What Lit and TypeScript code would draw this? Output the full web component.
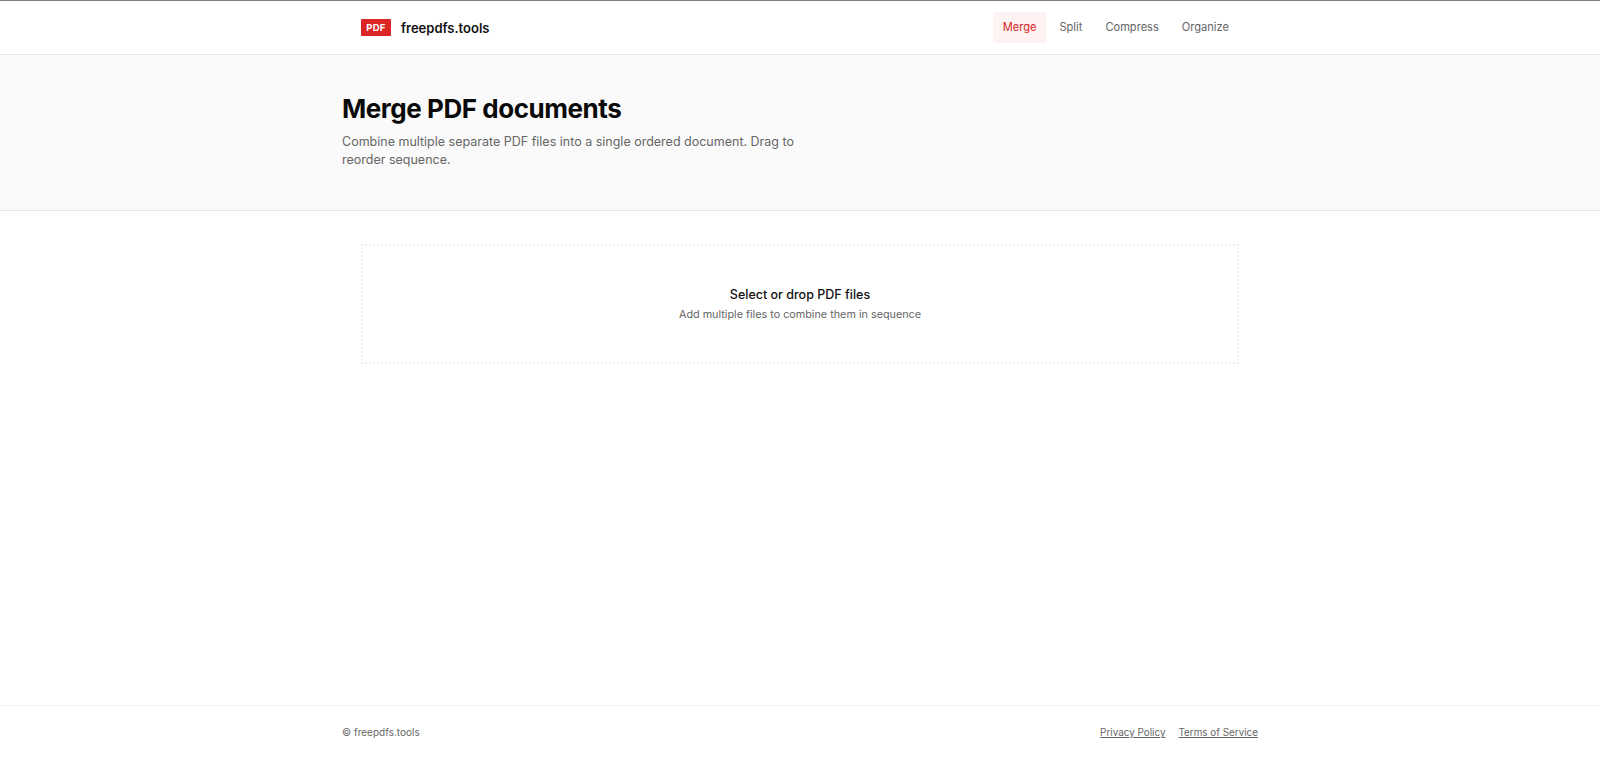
import { LitElement, css, html } from 'lit';
import { customElement } from 'lit/decorators.js';

@customElement('app-root')
export class AppRoot extends LitElement {
  static styles = css`
    :host {
      display: flex;
      flex-direction: column;
      min-height: 758px;
      background: #fff;
      color: #0a0a0a;
      font-family: 'Inter', 'Liberation Sans', sans-serif;
      box-sizing: border-box;
    }

    .topline {
      height: 1px;
      background: #7f7f7f;
    }

    header {
      height: 53px;
      border-bottom: 1px solid #e5e5e5;
      display: flex;
      justify-content: center;
    }

    .bar {
      width: 878px;
      display: flex;
      align-items: center;
      justify-content: space-between;
    }

    .brand {
      display: flex;
      align-items: center;
      gap: 10px;
      font-size: 13px;
      font-weight: 600;
      color: #111;
    }

    .badge {
      width: 30px;
      height: 17px;
      background: #dc2626;
      color: #fff;
      border-radius: 1px;
      font-size: 9.5px;
      font-weight: 700;
      letter-spacing: 0.3px;
      display: flex;
      align-items: center;
      justify-content: center;
    }

    nav {
      display: flex;
      gap: 3px;
      margin-bottom: 1px;
    }

    nav a {
      padding: 8px 10px;
      font-size: 11.1px;
      line-height: 15px;
      font-weight: 400;
      color: #666;
      border-radius: 3px;
    }

    nav a.active {
      background: #fef2f2;
      color: #dc2626;
    }

    .hero {
      height: 156px;
      box-sizing: border-box;
      background: #fafafa;
      border-bottom: 1px solid #e5e5e5;
      padding-top: 38px;
      display: flex;
      justify-content: center;
    }

    .hero-in {
      width: 916px;
    }

    h1 {
      margin: 0 0 9px;
      font-size: 26px;
      line-height: 31px;
      font-weight: 700;
      letter-spacing: -0.45px;
      color: #0a0a0a;
    }

    .hero p {
      margin: 0;
      max-width: 480px;
      font-size: 12.5px;
      line-height: 18.4px;
      color: #666;
    }

    main {
      flex: 1;
      display: flex;
      justify-content: center;
      padding-top: 33px;
    }

    .drop {
      width: 878px;
      height: 120px;
      box-sizing: border-box;
      border: 2px dotted #f0f0f0;
      display: flex;
      flex-direction: column;
      align-items: center;
      justify-content: center;
      gap: 6px;
    }

    .drop strong {
      font-size: 12.5px;
      line-height: 15px;
      font-weight: 500;
      color: #111;
    }

    .drop span {
      font-size: 10.8px;
      line-height: 14px;
      color: #666;
    }

    footer {
      height: 52px;
      border-top: 1px solid #f0f0f0;
      display: flex;
      justify-content: center;
      align-items: center;
    }

    .foot {
      width: 916px;
      display: flex;
      justify-content: space-between;
      font-size: 10px;
      color: #666;
    }

    .links {
      display: flex;
      gap: 13px;
      font-size: 9.9px;
    }

    .links a {
      color: #666;
      text-decoration: underline;
    }
  `;

  render() {
    return html`
      <div class="topline"></div>
      <header>
        <div class="bar">
          <div class="brand"><span class="badge">PDF</span>freepdfs.tools</div>
          <nav>
            <a class="active">Merge</a>
            <a>Split</a>
            <a>Compress</a>
            <a>Organize</a>
          </nav>
        </div>
      </header>
      <section class="hero">
        <div class="hero-in">
          <h1>Merge PDF documents</h1>
          <p>Combine multiple separate PDF files into a single ordered document. Drag to reorder sequence.</p>
        </div>
      </section>
      <main>
        <div class="drop">
          <strong>Select or drop PDF files</strong>
          <span>Add multiple files to combine them in sequence</span>
        </div>
      </main>
      <footer>
        <div class="foot">
          <span>© freepdfs.tools</span>
          <div class="links"><a>Privacy Policy</a><a>Terms of Service</a></div>
        </div>
      </footer>
    `;
  }
}
